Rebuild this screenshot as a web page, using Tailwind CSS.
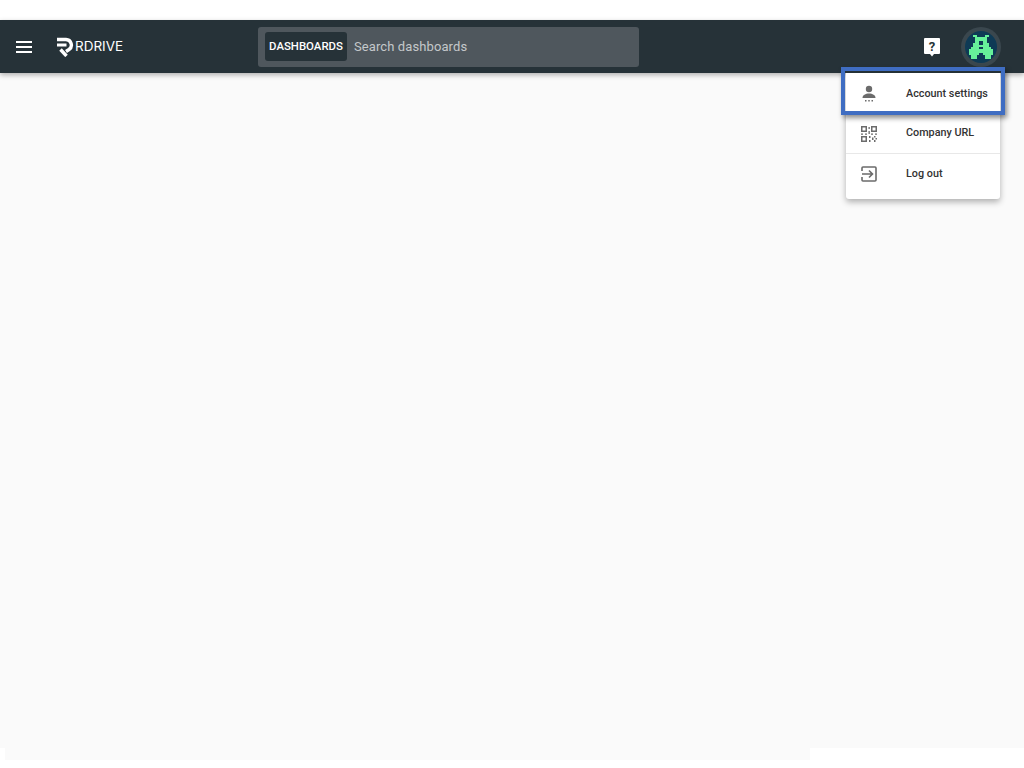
<!DOCTYPE html>
<html lang="en">
<head>
  <meta charset="UTF-8" />
  <title>Dashboards</title>
  <script src="https://cdn.jsdelivr.net/npm/@tailwindcss/browser@4"></script>
</head>
<body class="bg-white font-['Roboto',sans-serif] overflow-hidden">
  <div class="relative h-[768px] w-[1024px] pt-5">
    <!-- top bar -->
    <header class="relative z-10 flex h-[53px] items-center bg-[#263238] shadow-[0_2px_5px_rgba(0,0,0,0.3)]">
      <svg class="ml-[16px] h-[16px] w-[16px] text-white" viewBox="0 0 16 16" fill="currentColor">
        <rect y="2" width="16" height="2" /><rect y="7" width="16" height="2" /><rect y="12" width="16" height="2" />
      </svg>
      <div class="ml-6 flex w-[202px] items-center">
        <svg class="h-[20px] w-[18px] text-white" viewBox="0 0 18 20" fill="none" stroke="currentColor">
          <path stroke-width="3.400" d="M1 2.500h9a5.500 5.500 0 0 1 3 10L10 14.500" />
          <path stroke-width="3" d="M1 8h9.500" />
          <path stroke-width="3.400" d="M4.500 12.500l6 6.500" />
        </svg>
        <span class="ml-px font-['Inter',sans-serif] text-[13.5px] font-normal text-white">RDRIVE</span>
      </div>
      <div class="flex h-10 w-[381px] items-center rounded-[3px] bg-[#4f575d] pl-[7px]">
        <span class="flex h-[29px] w-[82px] items-center justify-center rounded-[3px] bg-[#263238] text-[11.4px] font-medium text-white">DASHBOARDS</span>
        <span class="ml-[7px] text-[13px] tracking-[0.1px] text-[#c4c8ca]">Search dashboards</span>
      </div>
      <svg class="ml-[284px] h-[20px] w-[18px]" viewBox="0 0 18 20">
        <path fill="#fff" d="M2 1h14a1 1 0 0 1 1 1v14a1 1 0 0 1-1 1h-5l-2 2.500L7 17H2a1 1 0 0 1-1-1V2a1 1 0 0 1 1-1z" />
        <text x="9" y="14" text-anchor="middle" font-family="Roboto" font-weight="700" font-size="13" fill="#263238">?</text>
      </svg>
      <div class="ml-[20px] flex h-10 w-10 items-center justify-center rounded-full bg-[#3a474e]">
        <div class="flex h-8 w-8 items-center justify-center rounded-full bg-[#0e3a55]">
          <svg class="h-6 w-6" viewBox="0 0 12 12" fill="#66f09a" shape-rendering="crispEdges">
            <path d="M2 0h2v1H2zM8 0h2v1H8zM3 1h6v2H3zM3 3h2v1H3zM7 3h2v1H7zM2 4h3v2H2zM7 4h3v2H7zM5 5h2v1H5zM1 6h4v1H1zM7 6h4v1H7zM0 7h5v3H0zM7 7h5v3H7zM5 7h2v2H5zM1 10h3v2H1zM8 10h3v2H8z" />
          </svg>
        </div>
      </div>
    </header>

    <main class="h-[675px] bg-[#fafafa]"></main>
    <div class="ml-[5px] h-3 w-[805px] bg-[#fafafa]"></div>

    <!-- account menu -->
    <div class="absolute left-[846px] top-[73px] z-20 w-[154px] rounded-b-[3px] bg-white pt-px pb-[5px] text-[10.8px] font-medium text-[#333] shadow-[0_3px_6px_rgba(0,0,0,0.3)]">
      <a class="flex h-10 items-center pl-[15px]">
        <svg class="h-[18px] w-4 text-[#6b6b6b]" viewBox="0 0 16 18" fill="currentColor">
          <circle cx="8" cy="4" r="3.200" />
          <path d="M1.500 13c0-3 3-4.500 6.500-4.500s6.500 1.500 6.500 4.500z" />
          <rect x="4" y="15" width="1.500" height="1.500" /><rect x="7.250" y="15" width="1.500" height="1.500" /><rect x="10.500" y="15" width="1.500" height="1.500" />
        </svg>
        <span class="ml-[29px]">Account settings</span>
      </a>
      <a class="flex h-10 items-center border-b border-[#e8e8e8] pl-[15px]">
        <svg class="h-4 w-4 text-[#6b6b6b]" viewBox="0 0 16 16" fill="currentColor">
          <path fill-rule="evenodd" d="M0 0h6v6H0zM1.500 1.500v3h3v-3zM10 0h6v6h-6zM11.500 1.500v3h3v-3zM0 10h6v6H0zM1.500 11.500v3h3v-3z" />
          <path d="M7.500 1h1.300v2H7.500zM7.500 5h1.300v3H7.500zM0 7.500h2v1.300H0zM4 7.500h2v1.300H4zM10 7.500h2v1.300h-2zM14 7.500h2v1.300h-2zM8 10h1.500v2H8zM13 10h1.500v1.500H13zM11 11.500h1.500V14H11zM14.500 12H16v1.500h-1.500zM8 14h1.500v2H8zM13 14h1.500v2H13z" />
        </svg>
        <span class="ml-[29px]">Company URL</span>
      </a>
      <a class="flex h-10 items-center pl-[15px]">
        <svg class="h-4 w-4 text-[#6b6b6b]" viewBox="0 0 16 16" fill="none" stroke="currentColor" stroke-width="1.600">
          <path d="M1 5V2a1 1 0 0 1 1-1h12a1 1 0 0 1 1 1v12a1 1 0 0 1-1 1H2a1 1 0 0 1-1-1v-3" />
          <path d="M1 8h10M8 4.500 11.500 8 8 11.500" />
        </svg>
        <span class="ml-[29px]">Log out</span>
      </a>
    </div>

    <!-- highlighted item -->
    <div class="absolute left-[841px] top-[67px] z-30 h-[48px] w-[164px] border-4 border-[#3f6dc2] shadow-[2px_3px_5px_rgba(0,0,0,0.45)]"></div>
  </div>
</body>
</html>
